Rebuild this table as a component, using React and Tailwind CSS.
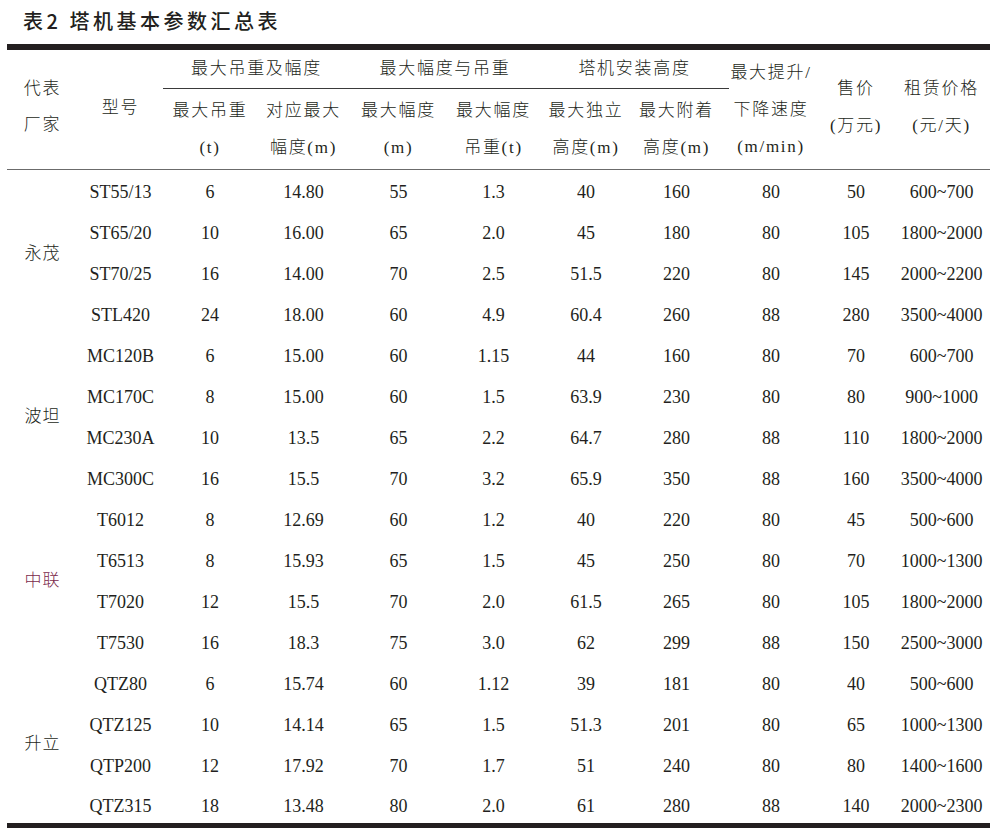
const groups = [
  {
    maker: "永茂",
    tone: "text-[#231f20]",
    rows: [
      ["ST55/13", "6", "14.80", "55", "1.3", "40", "160", "80", "50", "600~700"],
      ["ST65/20", "10", "16.00", "65", "2.0", "45", "180", "80", "105", "1800~2000"],
      ["ST70/25", "16", "14.00", "70", "2.5", "51.5", "220", "80", "145", "2000~2200"],
      ["STL420", "24", "18.00", "60", "4.9", "60.4", "260", "88", "280", "3500~4000"],
    ],
  },
  {
    maker: "波坦",
    tone: "text-[#231f20]",
    rows: [
      ["MC120B", "6", "15.00", "60", "1.15", "44", "160", "80", "70", "600~700"],
      ["MC170C", "8", "15.00", "60", "1.5", "63.9", "230", "80", "80", "900~1000"],
      ["MC230A", "10", "13.5", "65", "2.2", "64.7", "280", "88", "110", "1800~2000"],
      ["MC300C", "16", "15.5", "70", "3.2", "65.9", "350", "88", "160", "3500~4000"],
    ],
  },
  {
    maker: "中联",
    tone: "text-[#7b2a4b]",
    rows: [
      ["T6012", "8", "12.69", "60", "1.2", "40", "220", "80", "45", "500~600"],
      ["T6513", "8", "15.93", "65", "1.5", "45", "250", "80", "70", "1000~1300"],
      ["T7020", "12", "15.5", "70", "2.0", "61.5", "265", "80", "105", "1800~2000"],
      ["T7530", "16", "18.3", "75", "3.0", "62", "299", "88", "150", "2500~3000"],
    ],
  },
  {
    maker: "升立",
    tone: "text-[#231f20]",
    rows: [
      ["QTZ80", "6", "15.74", "60", "1.12", "39", "181", "80", "40", "500~600"],
      ["QTZ125", "10", "14.14", "65", "1.5", "51.3", "201", "80", "65", "1000~1300"],
      ["QTP200", "12", "17.92", "70", "1.7", "51", "240", "80", "80", "1400~1600"],
      ["QTZ315", "18", "13.48", "80", "2.0", "61", "280", "88", "140", "2000~2300"],
    ],
  },
];

const widths = [71, 85, 94, 93, 97, 93, 92, 97, 84, 86, 91];

// nudges so the numbers sit where the print has them
const cellPad = ["", "", "", "", "", "", "", "pr-[8px]", "", "", "pr-[6px]"];

const Stack = ({ lines, lead = "leading-[37px]" }) => (
  <div className={lead}>
    {lines.map((l) => (
      <div key={l}>{l}</div>
    ))}
  </div>
);

export default function App() {
  return (
    <div className="w-[997px] h-[833px] bg-white text-[#231f20] overflow-hidden">
      <div
        className="pl-[23px] pt-[9px] text-[20px] leading-[24px] font-medium tracking-[3.5px]"
        style={{ fontFamily: "'Noto Sans CJK SC', sans-serif" }}
      >
        表2 塔机基本参数汇总表
      </div>

      <div className="ml-[7px] mt-[11px] w-[983px]">
        <div className="h-[6px] bg-[#231f20]" />
        <table
          className="w-[983px] table-fixed border-collapse text-center"
          style={{ fontFamily: "'Liberation Serif', 'Noto Sans CJK SC', serif" }}
        >
          <colgroup>
            {widths.map((w, i) => (
              <col key={i} style={{ width: w }} />
            ))}
          </colgroup>
          <thead className="text-[17px] font-light tracking-[1.7px]">
            <tr className="h-[38px]">
              <th rowSpan={2} className="font-light align-middle border-b border-[#6b6b6b] pb-[4px]">
                <Stack lines={["代表", "厂家"]} lead="leading-[36px]" />
              </th>
              <th rowSpan={2} className="font-light align-middle border-b border-[#6b6b6b] pb-[4px]">
                型号
              </th>
              <th colSpan={2} className="font-light border-b border-[#3a3a3a] leading-[36px]">
                最大吊重及幅度
              </th>
              <th colSpan={2} className="font-light border-b border-[#3a3a3a] leading-[36px]">
                最大幅度与吊重
              </th>
              <th colSpan={2} className="font-light border-b border-[#3a3a3a] leading-[36px]">
                塔机安装高度
              </th>
              <th rowSpan={2} className="font-light align-middle border-b border-[#6b6b6b]">
                <Stack lines={["最大提升/", "下降速度", "(m/min)"]} />
              </th>
              <th rowSpan={2} className="font-light align-middle border-b border-[#6b6b6b] pb-[4px]">
                <Stack lines={["售价", "(万元)"]} />
              </th>
              <th rowSpan={2} className="font-light align-middle border-b border-[#6b6b6b] pb-[4px] pr-[6px]">
                <Stack lines={["租赁价格", "(元/天)"]} />
              </th>
            </tr>
            <tr className="h-[81px]">
              {[
                ["最大吊重", "(t)"],
                ["对应最大", "幅度(m)"],
                ["最大幅度", "(m)"],
                ["最大幅度", "吊重(t)"],
                ["最大独立", "高度(m)"],
                ["最大附着", "高度(m)"],
              ].map((lines, i) => (
                <th
                  key={i}
                  className={`font-light align-middle border-b border-[#6b6b6b] ${i === 5 ? "pr-[8px]" : ""}`}
                >
                  <Stack lines={lines} />
                </th>
              ))}
            </tr>
          </thead>
          <tbody className="text-[18px]">
            {groups.map((g, gi) =>
              g.rows.map((r, ri) => {
                const last = gi === groups.length - 1 && ri === g.rows.length - 1;
                return (
                  <tr key={r[0]} className={last ? "h-[39px]" : "h-[41px]"}>
                    {ri === 0 && (
                      <td
                        rowSpan={4}
                        className={`align-middle text-[17px] tracking-[1px] font-light pt-[4px] ${g.tone}`}
                      >
                        {g.maker}
                      </td>
                    )}
                    {r.map((v, ci) => (
                      <td
                        key={ci}
                        className={`align-middle leading-[20px] pt-[4px] ${cellPad[ci + 1]}`}
                      >
                        {v}
                      </td>
                    ))}
                  </tr>
                );
              })
            )}
          </tbody>
        </table>
        <div className="h-[5px] bg-[#231f20]" />
      </div>
    </div>
  );
}
